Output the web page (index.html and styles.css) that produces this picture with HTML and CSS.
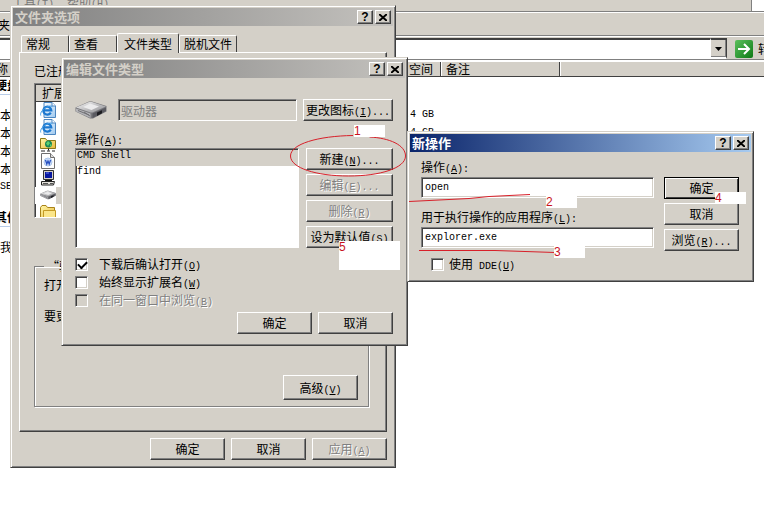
FILE: index.html
```html
<!DOCTYPE html>
<html lang="zh-CN">
<head>
<meta charset="utf-8">
<title>文件夹选项</title>
<link rel="stylesheet" href="styles.css">
</head>
<body>
<svg class="defs" aria-hidden="true">
  <defs>
    <linearGradient id="paper" x1="0" y1="0" x2="1" y2="1"><stop offset="0" stop-color="#fff"/><stop offset="1" stop-color="#9cc8f0"/></linearGradient>
    <linearGradient id="top" x1="0" y1="0" x2="1" y2="1"><stop offset="0" stop-color="#f4f4f4"/><stop offset="1" stop-color="#8e8e92"/></linearGradient>
    <linearGradient id="gold" x1="0" y1="0" x2="1" y2="1"><stop offset="0" stop-color="#fff6a8"/><stop offset="1" stop-color="#e8b93c"/></linearGradient>
    <linearGradient id="go" x1="0" y1="0" x2="1" y2="1"><stop offset="0" stop-color="#5cc05c"/><stop offset="1" stop-color="#0d7a16"/></linearGradient>
  </defs>
  <symbol id="ie" viewBox="0 0 16 16">
    <path d="M4 .5h8l3.500 3.500v11.500H4z" fill="url(#paper)" stroke="#4c86c0"/>
    <path d="M12 .5V4h3.500" fill="#fff" stroke="#4c86c0"/>
    <path d="M10.800 10.600A4 4 0 1 1 11.300 8.300H4.200" fill="none" stroke="#1c78d0" stroke-width="2.200"/>
    <path d="M.8 13.500C-.3 11 3 6.500 8 4.600c2.500-.9 4.200-.7 4.200.5" fill="none" stroke="#3f9be4"/>
  </symbol>
  <symbol id="drive" viewBox="0 0 32 18">
    <path d="M.5 6.500 14 .5h3L31.500 5v5.500L18 17.500h-3L.5 10.500z" fill="#77777b"/>
    <path d="M1 6.500 14 1h3l14 4.500-13.500 6h-2z" fill="url(#top)"/>
    <path d="M1 7.500 15.500 12.500v4.500L1 10.500z" fill="#b4b4b8"/>
    <path d="M17.500 12.500 31 6.500V10l-13.500 7z" fill="#5a5a60"/>
    <path d="m8 6 7-3.500 9 3-7.500 3.500z" fill="#ebebec"/>
    <path d="m22 11.500 5-2.200v3L22 15z" fill="#1e1e22"/>
    <path d="m3 9.500 11 4.500M9 11l6 4" stroke="#707074"/>
  </symbol>
  <symbol id="netfolder" viewBox="0 0 16 16">
    <path d="M.5 2.500h5l1.500 2h8.500v8H.5z" fill="url(#gold)" stroke="#8c7a18"/>
    <circle cx="8.500" cy="8" r="3.500" fill="#188858"/><path d="M6 7.500 8 5l2 2-2 3zM10 8l2 1-2 2z" fill="#5cd070"/>
    <path d="M8.500 12.500v2M1 15h4m2 0h3m2 0h3" stroke="#222" stroke-width="1"/>
  </symbol>
  <symbol id="doc" viewBox="0 0 16 16">
    <path d="M1.500.5h9l4 4v11h-13z" fill="#fff" stroke="#707070"/><path d="M10.500.5v4h4" fill="#ddd" stroke="#707070"/>
    <circle cx="8" cy="9" r="4" fill="#d6e6fa" stroke="#a9c4ea"/>
    <path d="m5.500 7 1.300 4L8 8l1.200 3 1.300-4" fill="none" stroke="#2850c0" stroke-width="1.300"/>
  </symbol>
  <symbol id="computer" viewBox="0 0 16 16">
    <path d="M3.500.5h10v9h-10z" fill="#d4d0c8" stroke="#333"/><path d="M5 2h7v6H5z" fill="#0818a0"/>
    <path d="M6 3h3" stroke="#6a7cf0"/><path d="M1.500 11.500h13l-1 3.500h-12z" fill="#e4e2dc" stroke="#222"/>
    <path d="M3 13.500h5m2 0h3" stroke="#555"/><path d="M5 10.500h7" stroke="#111"/>
  </symbol>
  <symbol id="folder" viewBox="0 0 16 16">
    <path d="M.5 3.500 2 1.500h4l1.500 2h7v12H.5z" fill="url(#gold)" stroke="#a98218"/><path d="M3.500 6.500h12v9h-12z" fill="#fbe68a" stroke="#c49a24"/>
  </symbol>
</svg>

<main class="explorer">
  <nav class="menubar"><span>工具<i>(T)</i></span><span>帮助<i>(H)</i></span><b class="brand"></b></nav>
  <div class="toolbar">夹</div>
  <div class="address">
    <input class="url" type="text" aria-label="地址">
    <button class="drop" aria-label="展开"><svg width="7" height="4"><path d="M0 0h7L3.500 4z"/></svg></button>
    <button class="go"><svg width="18" height="18"><rect width="18" height="18" rx="2" fill="url(#go)"/><path d="M3 9h11M9 4l5 5-5 5" fill="none" stroke="#fff" stroke-width="2"/></svg>转</button>
  </div>
  <div class="columns"><span class="name">称</span><span class="space">空间</span><span class="note">备注</span></div>
  <div class="files">
    <h2>硬盘</h2>
    <p><span>本</span><i>.4 GB</i></p>
    <p><span>本</span><i>.4 GB</i></p>
    <p><span>本</span></p>
    <p><span>本</span></p>
    <p><i>SE</i></p>
    <h2>其他</h2>
    <p>我</p>
  </div>
</main>

<section class="window options">
  <header class="title"><h1>文件夹选项</h1>
    <button class="cap" aria-label="帮助">?</button><button class="cap" aria-label="关闭"><svg width="8" height="7"><path d="m0 0 8 7M8 0 0 7"/></svg></button></header>
  <div class="body">
    <div class="tabs"><button>常规</button><button>查看</button><button class="active">文件类型</button><button>脱机文件</button></div>
    <div class="panel">
      <p class="line">已注册</p>
      <div class="types">
        <div class="head">扩展</div>
        <ul>
          <li><svg><use href="#ie"/></svg></li>
          <li><svg><use href="#ie"/></svg></li>
          <li><svg><use href="#netfolder"/></svg></li>
          <li><svg><use href="#doc"/></svg></li>
          <li><svg><use href="#computer"/></svg></li>
          <li class="picked"><svg><use href="#drive"/></svg></li>
          <li><svg><use href="#folder"/></svg></li>
        </ul>
      </div>
      <fieldset>
        <legend>“驱</legend>
        <p class="line">打开</p>
        <p class="line">要更</p>
        <button class="btn tall">高级<i>(<u>V</u>)</i></button>
      </fieldset>
    </div>
    <footer class="actions"><button class="btn">确定</button><button class="btn">取消</button><button class="btn" disabled>应用<i>(<u>A</u>)</i></button></footer>
  </div>
</section>

<section class="window edit">
  <header class="title"><h1>编辑文件类型</h1>
    <button class="cap" aria-label="帮助">?</button><button class="cap" aria-label="关闭"><svg width="8" height="7"><path d="m0 0 8 7M8 0 0 7"/></svg></button></header>
  <div class="body">
    <div class="kind">
      <svg width="32" height="18"><use href="#drive"/></svg>
      <input class="field" type="text" value="驱动器" aria-label="文件类型" disabled>
      <button class="btn">更改图标<i>(<u>I</u>)...</i></button>
    </div>
    <label class="line" for="ops">操作<i>(<u>A</u>):</i></label>
    <div class="ops">
      <select id="ops" size="6"><option class="current">CMD Shell</option><option>find</option></select>
      <div class="stack">
        <button class="btn">新建<i>(<u>N</u>)...</i></button>
        <button class="btn" disabled>编辑<i>(<u>E</u>)...</i></button>
        <button class="btn" disabled>删除<i>(<u>R</u>)</i></button>
        <button class="btn">设为默认值<i>(<u>S</u>)</i></button>
      </div>
    </div>
    <div class="checks">
      <label class="check"><input type="checkbox" checked><span>下载后确认打开<i>(<u>O</u>)</i></span></label>
      <label class="check"><input type="checkbox"><span>始终显示扩展名<i>(<u>W</u>)</i></span></label>
      <label class="check off"><input type="checkbox" disabled><span>在同一窗口中浏览<i>(<u>B</u>)</i></span></label>
    </div>
    <footer class="actions"><button class="btn">确定</button><button class="btn">取消</button></footer>
  </div>
</section>

<section class="window action">
  <header class="title"><h1>新操作</h1>
    <button class="cap" aria-label="帮助">?</button><button class="cap" aria-label="关闭"><svg width="8" height="7"><path d="m0 0 8 7M8 0 0 7"/></svg></button></header>
  <div class="body">
    <div class="form">
      <label class="line" for="verb">操作<i>(<u>A</u>):</i></label>
      <input class="field" id="verb" type="text" value="open">
      <label class="line" for="app">用于执行操作的应用程序<i>(<u>L</u>):</i></label>
      <input class="field" id="app" type="text" value="explorer.exe">
      <label class="check"><input type="checkbox"><span>使用<i>&nbsp;DDE(<u>U</u>)</i></span></label>
    </div>
    <div class="stack"><button class="btn default">确定</button><button class="btn">取消</button><button class="btn">浏览<i>(<u>R</u>)...</i></button></div>
  </div>
</section>

<svg class="ink" aria-hidden="true"><path d="M353 135.500C318 136 290.500 144 290.500 156s26 20 58 20 57-8 57-20c0-11-16-18-36-19M409 201.500l60-3 20-2 41-2M419 250.500l76 0 60 2"/></svg>
<span class="mark m1">1</span><span class="mark m2">2</span><span class="mark m3">3</span><span class="mark m4">4</span><span class="mark m5">5</span>
</body>
</html>
```
FILE: styles.css
```css
* { box-sizing: border-box; }
body, h1, h2, p, ul { margin: 0; padding: 0; }
body {
  min-height: 100vh;
  background: #fff;
  color: #000;
  font: 12px/16px "Noto Sans CJK SC", sans-serif;
  overflow: hidden;
}
button, input, select { font: inherit; color: inherit; margin: 0; }
i { font: 10px/8px "Liberation Mono", monospace; }
.defs { position: absolute; width: 0; height: 0; }

/* Explorer window behind the dialogs */
.menubar { display: flex; gap: 13px; height: 12px; padding-left: 12px; background: #d4d0c8; border-bottom: 1px solid #808080; color: #777; line-height: 4px; }
.menubar i { line-height: 4px; }
.brand { width: 13px; margin-left: auto; background: #fff; border-left: 1px solid #808080; }
.toolbar { height: 24px; padding-top: 4px; background: #d4d0c8; border-top: 1px solid #fff; border-bottom: 1px solid #808080; text-indent: -2px; }
.address { display: flex; height: 24px; padding-top: 1px; background: #d4d0c8; border-top: 1px solid #fff; border-bottom: 1px solid #808080; }
.url { flex: 1; min-width: 0; padding: 0; background: #fff; border: solid #404040; border-width: 2px 0 0; }
.drop { display: flex; align-items: center; justify-content: center; width: 17px; padding: 0; border: solid; border-width: 2px 1px; border-color: #404040 #404040 #fff #fff; background: #d4d0c8; box-shadow: inset -1px -1px #808080; }
.go { display: flex; align-items: center; gap: 5px; width: 37px; padding: 0 0 0 8px; border: 0; background: none; overflow: hidden; }
.go svg { flex: none; }
.columns { display: flex; height: 17px; background: #d4d0c8; border-top: 2px solid #fff; border-bottom: 1px solid #404040; line-height: 14px; }
.columns span { border-right: 1px solid #404040; box-shadow: 1px 0 #fff; }
.name { width: 407px; text-indent: -4px; }
.space { width: 34px; padding-left: 2px; }
.note { width: 119px; padding-left: 5px; }
.files h2 { width: 400px; height: 18px; border-bottom: 1px solid #b8cce8; font-size: 12px; line-height: 16px; text-indent: -5px; }
.files p { display: flex; align-items: center; height: 18px; }
.files h2 + p { margin-top: 11px; }
.files p + h2 { margin-top: 13px; }
.files p span { width: 404px; }

/* Dialog frame */
.window { position: absolute; padding: 2px; background: #d4d0c8; border: 1px solid; border-color: #d4d0c8 #404040 #404040 #d4d0c8; box-shadow: inset 1px 1px #fff, inset -1px -1px #808080; }
.options { left: 10px; top: 5px; width: 386px; }
.edit { left: 61px; top: 57px; width: 347px; }
.action { left: 407px; top: 131px; width: 347px; }
.title { display: flex; align-items: center; height: 18px; padding: 0 2px; background: linear-gradient(90deg, #808080, #c4c2be); color: #d4d0c8; }
.title h1 { flex: 1; font-size: 13px; line-height: 18px; }
.action .title { background: linear-gradient(90deg, #0a246a, #a6caf0); color: #fff; }
.cap { width: 16px; height: 14px; padding: 0; background: #d4d0c8; border: 1px solid; border-color: #fff #404040 #404040 #fff; box-shadow: inset -1px -1px #808080; color: #000; font: bold 12px/12px "Liberation Sans", sans-serif; }
.cap + .cap { margin-left: 2px; }
.cap path { stroke: #000; stroke-width: 2; }

/* Shared controls */
.btn { min-width: 75px; height: 22px; padding: 0; background: #d4d0c8; border: 1px solid; border-color: #fff #404040 #404040 #fff; box-shadow: inset -1px -1px #808080; line-height: 18px; white-space: nowrap; }
.btn.tall { height: 25px; }
.btn.default { border-color: #000; box-shadow: inset 1px 1px #fff, inset -1px -1px #404040; }
.btn:disabled, .check.off { color: #808080; text-shadow: 1px 1px #fff; }
.field { height: 22px; padding: 0 2px; background: #fff; border: 1px solid; border-color: #808080 #fff #fff #808080; box-shadow: inset 1px 1px #404040, inset -1px -1px #d4d0c8; }
.field:disabled { background: #d4d0c8; color: #808080; }
.action .field { height: 21px; padding-left: 3px; font: 10px/18px "Liberation Mono", monospace; }
.line { display: block; line-height: 16px; }
.check { display: flex; align-items: center; height: 18px; }
.check input { appearance: none; width: 13px; height: 13px; margin-right: 11px; background: #fff; border: 1px solid; border-color: #808080 #fff #fff #808080; box-shadow: inset 1px 1px #404040, inset -1px -1px #d4d0c8; }
.check input:checked::after { content: ""; display: block; width: 7px; height: 4px; margin: 2px; border: solid #000; border-width: 0 0 2px 2px; transform: rotate(-45deg); }
.check input:disabled { background: #d4d0c8; }
.actions { display: flex; justify-content: flex-end; gap: 6px; }

/* Folder options */
.options .body { padding: 7px 6px 5px; }
.tabs { display: flex; align-items: flex-end; height: 19px; padding-left: 2px; }
.tabs button { min-width: 48px; height: 17px; padding: 0 4px; background: #d4d0c8; border: solid; border-width: 1px 1px 0; border-color: #fff #404040 #fff #fff; border-radius: 2px 2px 0 0; line-height: 16px; text-align: left; }
.tabs .active { height: 20px; margin-bottom: -1px; padding: 0 6px; z-index: 1; }
.panel { margin-bottom: 6px; padding: 10px 17px 24px 14px; border: 1px solid; border-color: #fff #404040 #404040 #fff; box-shadow: inset -1px -1px #808080; }
.types { height: 135px; margin-top: 4px; background: #fff; border: 1px solid; border-color: #808080 #fff #fff #808080; box-shadow: inset 1px 1px #404040; overflow: hidden; }
.head { height: 17px; margin: 1px 0 0 1px; padding-left: 6px; background: #d4d0c8; border-bottom: 1px solid #404040; line-height: 15px; }
.types ul { list-style: none; }
.types li { height: 17px; padding-left: 5px; }
.types li svg { display: block; width: 16px; height: 16px; }
.types .picked { background: linear-gradient(90deg, #fff 21px, #d4d0c8 21px); }
fieldset { display: flex; flex-direction: column; margin: 40px 0 0; padding: 3px 10px 6px 9px; border: 1px solid #808080; box-shadow: 1px 1px #fff, inset 1px 1px #fff; }
legend { padding: 0 3px; line-height: 16px; }
fieldset .line + .line { margin-top: 15px; }
fieldset .btn { align-self: flex-end; margin-top: 51px; }

/* Edit file type */
.edit .body { padding: 21px 12px 9px 11px; }
.kind { display: flex; align-items: center; margin-bottom: 10px; }
.kind .field { flex: 1; min-width: 0; margin: 0 6px 0 11px; }
.kind .btn { width: 90px; }
.ops { display: flex; gap: 7px; margin-top: 1px; }
.ops select { flex: 1; min-width: 0; padding: 1px 0 0; background: #fff; border: 1px solid; border-color: #808080 #fff #fff #808080; border-radius: 0; box-shadow: inset 1px 1px #404040; font: 10px/16px "Liberation Mono", monospace; overflow: hidden; }
.ops option { height: 16px; min-height: 16px; padding: 0 1px; line-height: 16px; }
.ops .current { background: #d4d0c8; }
.stack { display: flex; flex-direction: column; gap: 4px; }
.ops .btn { width: 87px; }
.checks { margin: 7px 0 3px; }

/* New action */
.action .body { display: flex; gap: 10px; padding: 7px 12px 6px 11px; }
.form { display: flex; flex: 1; flex-direction: column; }
.form .line + .field { margin-top: 2px; }
.form .field + .line { margin-top: 11px; }
.form .check { margin: 7px 0 0 10px; }
.form .check input { margin-right: 5px; }
.action .stack { padding-top: 18px; }

/* Pen annotations */
.ink { position: absolute; left: 0; top: 0; width: 100%; height: 100%; fill: none; stroke: #d8202a; pointer-events: none; }
.mark { position: absolute; width: 31px; height: 12px; background: #fff; color: #c8141e; font: 12px/12px "Liberation Sans", sans-serif; }
.m1 { left: 354px; top: 125px; }
.m2 { left: 546px; top: 196px; }
.m3 { left: 554px; top: 246px; }
.m4 { left: 715px; top: 192px; }
.m5 { left: 339px; top: 241px; width: 61px; height: 29px; }
```
